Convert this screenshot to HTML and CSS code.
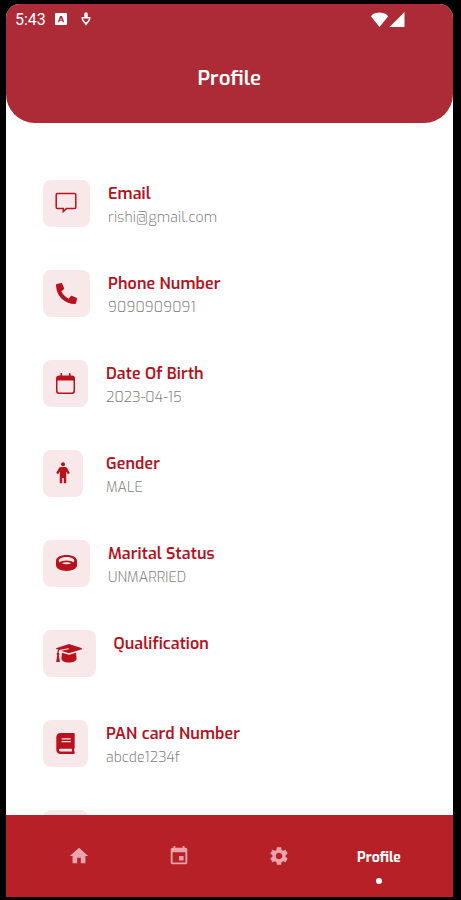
FILE: index.html
```html
<!DOCTYPE html>
<html lang="en">
<head>
    <meta charset="UTF-8">
    <meta name="viewport" content="width=device-width, initial-scale=1.0">
    <title>Profile</title>
    <link rel="stylesheet" href="styles.css">
</head>
<body>
    <div class="phone">
        <header class="header">
            <div class="status-bar">
                <span class="time">5:43</span>
                <svg class="status-app" viewBox="0 0 12 12"><path fill-rule="evenodd" d="M1 0h10a1 1 0 0 1 1 1v10a1 1 0 0 1-1 1H1a1 1 0 0 1-1-1V1a1 1 0 0 1 1-1zM5 3L2.8 9.2h1.4l.5-1.4h2.6l.5 1.4h1.4L7 3zM6 4.700l.8 2H5.200z"/></svg>
                <svg class="status-mic" viewBox="0 0 10 14"><path d="M3.300 5V2.200C3.300.9 3.900.2 5 .2s1.700.7 1.700 2V5z"/><path class="mic-line" d="M1.300 5.800h7.400Q8.700 9.200 5 11.400 1.300 9.200 1.300 5.800z"/><path d="M3 10.300h4l-2 3.500z"/></svg>
                <svg class="status-signal" viewBox="0 0 34 15"><path d="M0 4.500Q1 1 8.500.5 16 1 17 4.500L8.500 15zM33.500 0v15H18.500z"/></svg>
            </div>
            <h1>Profile</h1>
        </header>

        <main class="details">
            <div class="detail">
                <div class="icon-box">
                    <svg width="22" height="22" viewBox="0 0 22 22"><path class="line" d="M2.500 1.500h17a1.300 1.300 0 0 1 1.300 1.300v12.500a1.300 1.300 0 0 1-1.300 1.300H11.500L8.300 19.500v-2.900H2.500a1.300 1.300 0 0 1-1.300-1.300V2.800a1.300 1.300 0 0 1 1.300-1.300z"/></svg>
                </div>
                <div class="detail-text">
                    <h3>Email</h3>
                    <p class="wide">rishi@gmail.com</p>
                </div>
            </div>
            <div class="detail">
                <div class="icon-box">
                    <svg width="21" height="21" viewBox="0 0 512 512"><path d="M497.390 361.800l-112-48a24 24 0 0 0-28 6.900l-49.600 60.600A370.660 370.660 0 0 1 130.600 204.110l60.600-49.600a23.940 23.940 0 0 0 6.900-28l-48-112A24.160 24.160 0 0 0 122.600.610l-104 24A24 24 0 0 0 0 48c0 256.500 207.900 464 464 464a24 24 0 0 0 23.400-18.600l24-104a24.290 24.290 0 0 0-14.010-27.600z"/></svg>
                </div>
                <div class="detail-text">
                    <h3>Phone Number</h3>
                    <p class="wide">9090909091</p>
                </div>
            </div>
            <div class="detail">
                <div class="icon-box medium">
                    <svg width="19" height="21" viewBox="0 0 19 21"><path fill-rule="evenodd" d="M4.500 0H6v2.500h7V0h1.500v2.500H16a3 3 0 0 1 3 3V18a3 3 0 0 1-3 3H3a3 3 0 0 1-3-3V5.500a3 3 0 0 1 3-3h1.500zM1.500 7.500v10.300A1.700 1.700 0 0 0 3.200 19.500h12.600a1.700 1.700 0 0 0 1.700-1.700V7.500z"/></svg>
                </div>
                <div class="detail-text">
                    <h3>Date Of Birth</h3>
                    <p>2023-04-15</p>
                </div>
            </div>
            <div class="detail">
                <div class="icon-box small">
                    <svg width="14" height="22" viewBox="0 0 14 22"><circle cx="7" cy="2.300" r="2"/><path d="M5 5h4c.8 0 1.500.3 2 .9l2.800 5-1.900 1.300-1.700-2.700v11.700H7.800V16H6.200v5.200H3.800V9.500l-1.700 2.700L.2 10.900l2.800-5c.5-.6 1.200-.9 2-.9z"/></svg>
                </div>
                <div class="detail-text">
                    <h3>Gender</h3>
                    <p>MALE</p>
                </div>
            </div>
            <div class="detail">
                <div class="icon-box">
                    <svg width="21" height="16" viewBox="0 0 21 16"><path fill-rule="evenodd" d="M10.500 0C16.500 0 21 2.400 21 5.700v4.600C21 13.600 16.500 16 10.500 16S0 13.600 0 10.300V5.700C0 2.400 4.500 0 10.500 0zm0 2C6 2 2.700 3.700 2.700 5.600c0 .7.400 1.300 1 1.800C5 6.200 7.500 5.500 10.500 5.500s5.500.7 6.800 1.900c.6-.5 1-1.100 1-1.800C18.300 3.700 15 2 10.500 2zm0 5.300c-1.900 0-3.500.4-4.600 1 1.200.6 2.800.9 4.600.9s3.400-.3 4.600-.9c-1.100-.6-2.700-1-4.600-1z"/></svg>
                </div>
                <div class="detail-text">
                    <h3>Marital Status</h3>
                    <p>UNMARRIED</p>
                </div>
            </div>
            <div class="detail">
                <div class="icon-box large">
                    <svg width="26" height="19" viewBox="0 0 26 19"><path d="M13 0l12.300 3.900c.9.300.9 1.200 0 1.500L13.700 9q-.7.200-1.400 0L5 6.700l7.800-1.500-.2-1L4 5.800C2.900 6.300 2.600 7.400 2.600 8.700c1 .6 1 2 .2 2.600l1 6.100c.1.500-.1.700-.5.700H.7c-.4 0-.6-.3-.5-.7l1.100-6.100c-.9-.7-.8-2 .1-2.600 0-1.200.3-2.500.8-3.300L.7 5.300c-.9-.3-.9-1.100 0-1.400z"/><path d="M6 8.700l6 1.900q1 .3 2 0l6-1.900.6 6.100c0 2.300-3.800 3.800-7.600 3.800s-7.600-1.500-7.600-3.800z"/></svg>
                </div>
                <div class="detail-text">
                    <h3>Qualification</h3>
                </div>
            </div>
            <div class="detail">
                <div class="icon-box medium">
                    <svg width="19" height="21" viewBox="0 0 448 512"><path d="M448 360V24c0-13.300-10.700-24-24-24H96C43 0 0 43 0 96v320c0 53 43 96 96 96h328c13.300 0 24-10.700 24-24v-16c0-7.500-3.500-14.300-8.900-18.700-4.200-15.400-4.200-59.300 0-74.700 5.400-4.300 8.900-11.100 8.900-18.600zM128 134c0-3.300 2.700-6 6-6h212c3.300 0 6 2.700 6 6v20c0 3.300-2.700 6-6 6H134c-3.300 0-6-2.700-6-6v-20zm0 64c0-3.300 2.700-6 6-6h212c3.300 0 6 2.700 6 6v20c0 3.300-2.700 6-6 6H134c-3.300 0-6-2.700-6-6v-20zm253.400 250H96c-17.700 0-32-14.300-32-32 0-17.600 14.400-32 32-32h285.400c-1.900 17.100-1.900 46.900 0 64z"/></svg>
                </div>
                <div class="detail-text">
                    <h3>PAN card Number</h3>
                    <p>abcde1234f</p>
                </div>
            </div>
            <div class="detail">
                <div class="icon-box medium"></div>
            </div>
        </main>

        <nav class="bottom-nav">
            <a class="tab" title="Home"><svg viewBox="0 0 24 24"><path d="M10 20v-6h4v6h5v-8h3L12 3 2 12h3v8z"/></svg></a>
            <a class="tab" title="Calendar"><svg viewBox="0 0 24 24"><path d="M17 12h-5v5h5v-5zM16 1v2H8V1H6v2H5c-1.110 0-1.990.9-1.990 2L3 19c0 1.100.89 2 2 2h14c1.100 0 2-.9 2-2V5c0-1.100-.9-2-2-2h-1V1h-2zm3 18H5V8h14v11z"/></svg></a>
            <a class="tab" title="Settings"><svg viewBox="0 0 24 24"><path d="M19.140 12.940c.04-.3.060-.61.060-.94 0-.32-.02-.64-.07-.94l2.030-1.580c.18-.14.23-.41.12-.61l-1.920-3.320c-.12-.22-.37-.29-.59-.22l-2.390.96c-.5-.38-1.030-.7-1.620-.94l-.36-2.540c-.04-.24-.24-.41-.48-.41h-3.840c-.24 0-.43.17-.47.41l-.36 2.540c-.59.24-1.130.57-1.620.94l-2.390-.96c-.22-.08-.47 0-.59.22L2.740 8.870c-.12.21-.08.47.12.61l2.030 1.580c-.05.3-.09.63-.09.94s.02.64.07.94l-2.030 1.580c-.18.14-.23.41-.12.61l1.920 3.320c.12.22.37.29.59.22l2.390-.96c.5.38 1.030.7 1.620.94l.36 2.540c.05.24.24.41.48.41h3.840c.24 0 .44-.17.47-.41l.36-2.540c.59-.24 1.130-.56 1.620-.94l2.390.96c.22.08.47 0 .59-.22l1.920-3.320c.12-.22.07-.47-.12-.61l-2.010-1.580zM12 15.600c-1.980 0-3.600-1.620-3.600-3.600s1.620-3.600 3.600-3.600 3.600 1.620 3.600 3.600-1.620 3.600-3.600 3.600z"/></svg></a>
            <a class="tab active">Profile</a>
        </nav>
    </div>
</body>
</html>
```
FILE: styles.css
```css
* {
    box-sizing: border-box;
}

body {
    margin: 0;
    height: 900px;
    padding: 4px 8px 3px 6px;
    background-color: #000;
    font-family: 'Exo', 'Exo 2', 'Noto Sans', sans-serif;
    overflow: hidden;
}

.phone {
    width: 446.5px;
    height: 893px;
    display: flex;
    flex-direction: column;
    background-color: #fff;
    border-radius: 14px 14px 0 0;
    overflow: hidden;
}

.header {
    flex: none;
    height: 119px;
    background-color: #ac2b37;
    border-radius: 0 0 29px 29px;
    color: #fff;
}

.status-bar {
    display: flex;
    align-items: center;
    height: 30px;
    padding: 0 48px 0 9px;
    font-family: Roboto, sans-serif;
    font-size: 16px;
}

.status-bar svg {
    fill: #fff;
}

.time {
    width: 40px;
}

.status-app {
    width: 12px;
    height: 12px;
}

.status-mic {
    width: 10px;
    height: 14px;
    margin-left: 14px;
}

.status-mic .mic-line {
    fill: none;
    stroke: #fff;
    stroke-width: 1.5;
}

.status-signal {
    width: 34px;
    height: 15px;
    margin-left: auto;
}

.header h1 {
    margin: 29px 0 0;
    font-size: 20.5px;
    line-height: 30px;
    font-weight: 600;
    text-align: center;
}

.details {
    flex: 1;
    min-height: 0;
    overflow: hidden;
    padding: 56.5px 0 0 36.5px;
}

.detail {
    display: flex;
    gap: 18px;
    height: 47.5px;
    margin-bottom: 42.5px;
}

.icon-box {
    flex: none;
    width: 47.5px;
    display: flex;
    align-items: center;
    justify-content: center;
    background-color: #f8e8e9;
    border-radius: 8px;
}

.icon-box.small {
    width: 40.5px;
    margin-right: 5px;
}

.icon-box.medium {
    width: 45.5px;
}

.icon-box.large {
    width: 53px;
}

.icon-box svg {
    fill: #b8121d;
}

.icon-box .line {
    fill: none;
    stroke: #b8121d;
    stroke-width: 1.5;
}

.detail-text h3 {
    margin: 2px 0 0;
    font-size: 16px;
    line-height: 24px;
    font-weight: 600;
    letter-spacing: 0.12px;
    color: #b5121d;
    white-space: nowrap;
}

.detail-text p {
    margin: 0;
    font-size: 14px;
    line-height: 24px;
    font-weight: 300;
    letter-spacing: 0.1px;
    color: #808080;
}

.detail-text .wide {
    letter-spacing: 0.2px;
}

.bottom-nav {
    flex: none;
    display: flex;
    height: 82px;
    padding-left: 23px;
    background-color: #b82027;
}

.tab {
    position: relative;
    width: 100px;
    display: flex;
    align-items: center;
    justify-content: center;
    font-size: 14px;
    font-weight: 700;
}

.tab svg {
    width: 22px;
    height: 22px;
    fill: #eba4aa;
}

.tab.active {
    padding-top: 2px;
    color: #fff;
}

.tab.active::after {
    content: '';
    position: absolute;
    left: 47px;
    bottom: 13px;
    width: 6px;
    height: 6px;
    border-radius: 50%;
    background-color: #fff;
}
```
